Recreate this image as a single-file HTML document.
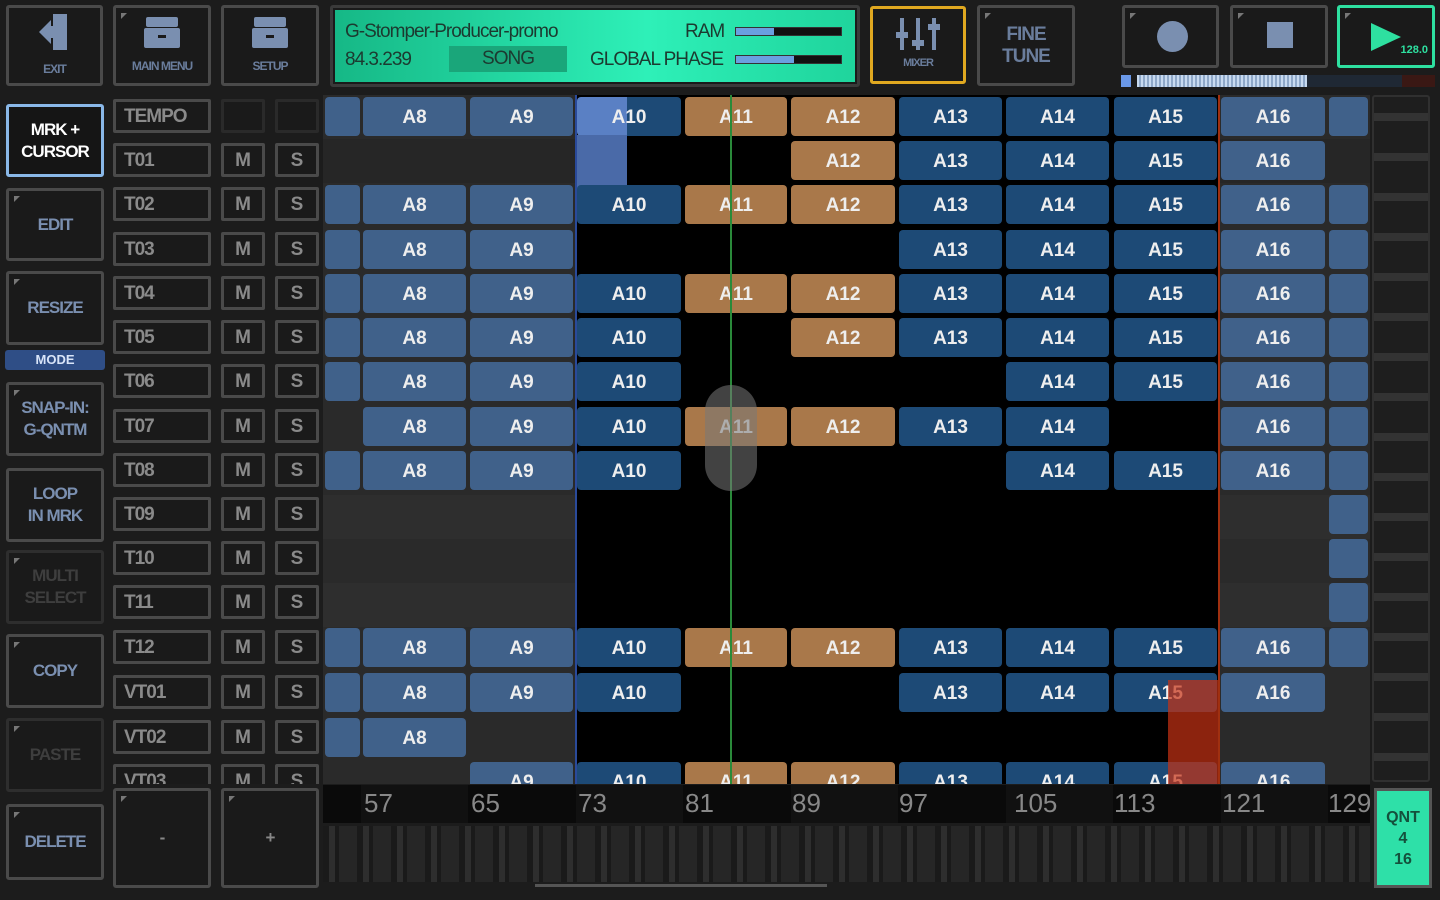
<!DOCTYPE html>
<html><head><meta charset="utf-8"><style>
*{margin:0;padding:0;box-sizing:border-box}
body{width:1440px;height:900px;background:#1c1c1c;position:relative;overflow:hidden;font-family:"Liberation Sans",sans-serif}
div{position:absolute}
.b{background:#1a1a1a;border:3px solid #4a4a4a;border-radius:3px;color:#7a8fb0;font-weight:bold;text-align:center;display:flex;align-items:center;justify-content:center;font-size:17px;line-height:22px;letter-spacing:-1px}
.b:before{content:"";position:absolute;left:5px;top:5px;border-left:6px solid #777;border-bottom:6px solid transparent}
.nb:before{display:none}
.tn{left:113px;width:98px;height:34px;background:#1a1a1a;border:3px solid #4a4a4a;border-radius:2px;color:#8a8a8a;font-weight:bold;font-size:19px;padding-left:8px;line-height:30px;letter-spacing:-1px}
.m,.s{width:44px;height:34px;background:#1a1a1a;border:3px solid #4a4a4a;border-radius:2px;color:#8a8a8a;font-weight:bold;font-size:19px;text-align:center;line-height:30px}
.m{left:221px}.s{left:275px}
.c{height:39px;border-radius:4px;color:#eee;font-weight:bold;font-size:19px;text-align:center;line-height:42px}
.l{background:#40618a}.d{background:#1d4a76}.t{background:#a9784a}
.r{color:#888;font-size:26px;top:788px}
</style></head><body>
<!-- top -->
<div class="b nb" style="left:6px;top:5px;width:97px;height:81px;flex-direction:column;font-size:12px;color:#6a7d9c"><svg width="36" height="40" viewBox="0 0 36 40"><rect x="16" y="2" width="14" height="36" fill="#7a8fb0"/><path d="M2 20 L14 8 V14 H16 V26 H14 V32 Z" fill="#7a8fb0"/></svg><span style="margin-top:6px">EXIT</span></div>
<div class="b" style="left:113px;top:5px;width:98px;height:81px;flex-direction:column;font-size:12px;color:#6a7d9c"><svg width="40" height="34" viewBox="0 0 40 34"><rect x="4" y="2" width="32" height="10" rx="2" fill="#7a8fb0"/><rect x="2" y="13" width="36" height="20" rx="2" fill="#7a8fb0"/><rect x="16" y="20" width="8" height="3" fill="#1a1a1a"/></svg><span style="margin-top:6px">MAIN MENU</span></div>
<div class="b nb" style="left:221px;top:5px;width:98px;height:81px;flex-direction:column;font-size:12px;color:#6a7d9c"><svg width="40" height="34" viewBox="0 0 40 34"><rect x="4" y="2" width="32" height="10" rx="2" fill="#7a8fb0"/><rect x="2" y="13" width="36" height="20" rx="2" fill="#7a8fb0"/><rect x="16" y="20" width="8" height="3" fill="#1a1a1a"/></svg><span style="margin-top:6px">SETUP</span></div>
<div style="left:330px;top:5px;width:530px;height:82px;border:3px solid #3a3a3a;border-radius:3px;background:#1a1a1a"></div>
<div style="left:335px;top:10px;width:520px;height:72px;background:linear-gradient(90deg,#16b886,#2ef0b8 60%,#1fd49c);color:#1c3a30;font-size:19px;letter-spacing:-1px">
<div style="left:10px;top:11px">G-Stomper-Producer-promo</div>
<div style="left:10px;top:39px">84.3.239</div>
<div style="left:114px;top:36px;width:118px;height:26px;background:#1aa67a;text-align:center;line-height:26px">SONG</div>
<div style="left:350px;top:11px">RAM</div>
<div style="left:255px;top:39px">GLOBAL PHASE</div>
<div style="left:400px;top:17px;width:107px;height:9px;background:#111;border:1px solid #333"><div style="left:0;top:0;width:38px;height:7px;background:#6aa0e0"></div></div>
<div style="left:400px;top:45px;width:107px;height:9px;background:#111;border:1px solid #333"><div style="left:0;top:0;width:58px;height:7px;background:#6aa0e0"></div></div>
</div>
<div class="b nb" style="left:870px;top:6px;width:96px;height:78px;border-color:#e0a820;flex-direction:column;font-size:11px;color:#6a7d9c"><svg width="48" height="36" viewBox="0 0 48 36"><g fill="#7a8fb0"><rect x="6" y="2" width="4" height="32"/><rect x="22" y="2" width="4" height="32"/><rect x="38" y="2" width="4" height="32"/><rect x="2" y="16" width="12" height="6"/><rect x="18" y="24" width="12" height="6"/><rect x="34" y="8" width="12" height="6"/></g></svg><span>MIXER</span></div>
<div class="b" style="left:977px;top:5px;width:98px;height:81px;font-size:19px;color:#6a7d9c">FINE<br>TUNE</div>
<div class="b" style="left:1122px;top:5px;width:97px;height:63px"><div style="left:32px;top:13px;width:31px;height:31px;border-radius:50%;background:#7a8fb0"></div></div>
<div class="b" style="left:1230px;top:5px;width:98px;height:63px"><div style="left:34px;top:14px;width:26px;height:26px;background:#7a8fb0"></div></div>
<div class="b" style="left:1337px;top:5px;width:98px;height:63px;border-color:#2ee0a0"><svg style="left:34px;top:12px" width="34" height="32"><path d="M2 2 L32 16 L2 30Z" fill="#2ee0a0"/></svg><div style="right:4px;bottom:4px;font-size:11px;color:#2ee0a0;letter-spacing:0">128.0</div></div>
<div style="left:1121px;top:75px;width:10px;height:12px;background:#6a98e8"></div>
<div style="left:1137px;top:75px;width:170px;height:12px;background:repeating-linear-gradient(90deg,#c8daf0 0 2px,#8fa8c8 2px 4px)"></div>
<div style="left:1307px;top:75px;width:95px;height:12px;background:#1f2834"></div>
<div style="left:1402px;top:75px;width:33px;height:12px;background:#3a1814"></div>
<!-- left buttons -->
<div class="b nb" style="left:6px;top:104px;width:98px;height:73px;border-color:#8ab8e8;color:#fff;background:#151515">MRK +<br>CURSOR</div>
<div class="b" style="left:6px;top:188px;width:98px;height:73px">EDIT</div>
<div class="b" style="left:6px;top:271px;width:98px;height:74px">RESIZE</div>
<div style="left:5px;top:350px;width:100px;height:20px;background:#2f4e86;border-radius:3px;color:#d8e4f8;font-weight:bold;font-size:13px;text-align:center;line-height:20px">MODE</div>
<div class="b" style="left:6px;top:382px;width:98px;height:74px">SNAP-IN:<br>G-QNTM</div>
<div class="b nb" style="left:6px;top:468px;width:98px;height:74px">LOOP<br>IN MRK</div>
<div class="b" style="left:6px;top:550px;width:98px;height:74px;color:#3e3e3e;border-color:#2e2e2e">MULTI<br>SELECT</div>
<div class="b" style="left:6px;top:634px;width:98px;height:74px">COPY</div>
<div class="b" style="left:6px;top:718px;width:98px;height:74px;color:#3e3e3e;border-color:#2e2e2e">PASTE</div>
<div class="b" style="left:6px;top:804px;width:98px;height:76px">DELETE</div>
<div class="b" style="left:113px;top:788px;width:98px;height:100px;color:#888">-</div>
<div class="b" style="left:221px;top:788px;width:98px;height:100px;color:#888">+</div>
<!-- tracks -->
<div class="tn" style="top:99px">TEMPO</div><div class="m" style="top:99px;border-color:#2a2a2a"></div><div class="s" style="top:99px;border-color:#2a2a2a"></div>
<div class="tn" style="top:143px">T01</div><div class="m" style="top:143px">M</div><div class="s" style="top:143px">S</div>
<div class="tn" style="top:187px">T02</div><div class="m" style="top:187px">M</div><div class="s" style="top:187px">S</div>
<div class="tn" style="top:232px">T03</div><div class="m" style="top:232px">M</div><div class="s" style="top:232px">S</div>
<div class="tn" style="top:276px">T04</div><div class="m" style="top:276px">M</div><div class="s" style="top:276px">S</div>
<div class="tn" style="top:320px">T05</div><div class="m" style="top:320px">M</div><div class="s" style="top:320px">S</div>
<div class="tn" style="top:364px">T06</div><div class="m" style="top:364px">M</div><div class="s" style="top:364px">S</div>
<div class="tn" style="top:409px">T07</div><div class="m" style="top:409px">M</div><div class="s" style="top:409px">S</div>
<div class="tn" style="top:453px">T08</div><div class="m" style="top:453px">M</div><div class="s" style="top:453px">S</div>
<div class="tn" style="top:497px">T09</div><div class="m" style="top:497px">M</div><div class="s" style="top:497px">S</div>
<div class="tn" style="top:541px">T10</div><div class="m" style="top:541px">M</div><div class="s" style="top:541px">S</div>
<div class="tn" style="top:585px">T11</div><div class="m" style="top:585px">M</div><div class="s" style="top:585px">S</div>
<div class="tn" style="top:630px">T12</div><div class="m" style="top:630px">M</div><div class="s" style="top:630px">S</div>
<div class="tn" style="top:675px">VT01</div><div class="m" style="top:675px">M</div><div class="s" style="top:675px">S</div>
<div class="tn" style="top:720px">VT02</div><div class="m" style="top:720px">M</div><div class="s" style="top:720px">S</div>
<div style="left:110px;top:762px;width:215px;height:22px;overflow:hidden"><div class="tn" style="left:3px;top:2px">VT03</div><div class="m" style="left:111px;top:2px">M</div><div class="s" style="left:165px;top:2px">S</div></div>
<!-- grid -->
<div style="left:323px;top:95px;width:1047px;height:689px;overflow:hidden;background:#2a2a2a">
<div style="left:0;top:44px;width:1047px;height:44px;background:#262626"></div>
<div style="left:0;top:400px;width:1047px;height:44px;background:#2e2e2e"></div>
<div style="left:0;top:488px;width:1047px;height:44px;background:#2e2e2e"></div>
<div style="left:254px;top:0;width:642px;height:689px;background:#000"></div>
<div style="left:0;top:0;width:1047px;height:689px">
<div class="c l" style="left:2px;top:2px;width:35px"></div><div class="c l" style="left:40px;top:2px;width:103px">A8</div><div class="c l" style="left:147px;top:2px;width:103px">A9</div><div class="c d" style="left:254px;top:2px;width:104px;background:linear-gradient(90deg,#5a80c4 50px,#1d4a76 50px)">A10</div><div class="c t" style="left:362px;top:2px;width:102px">A11</div><div class="c t" style="left:468px;top:2px;width:104px">A12</div><div class="c d" style="left:576px;top:2px;width:103px">A13</div><div class="c d" style="left:683px;top:2px;width:103px">A14</div><div class="c d" style="left:791px;top:2px;width:103px">A15</div><div class="c l" style="left:898px;top:2px;width:104px">A16</div><div class="c l" style="left:1006px;top:2px;width:39px"></div>
<div class="c t" style="left:468px;top:46px;width:104px">A12</div><div class="c d" style="left:576px;top:46px;width:103px">A13</div><div class="c d" style="left:683px;top:46px;width:103px">A14</div><div class="c d" style="left:791px;top:46px;width:103px">A15</div><div class="c l" style="left:898px;top:46px;width:104px">A16</div>
<div style="left:254px;top:40px;width:50px;height:62px;background:#4a6aa8;border-radius:0 0 3px 3px"></div>
<div class="c l" style="left:2px;top:90px;width:35px"></div><div class="c l" style="left:40px;top:90px;width:103px">A8</div><div class="c l" style="left:147px;top:90px;width:103px">A9</div><div class="c d" style="left:254px;top:90px;width:104px">A10</div><div class="c t" style="left:362px;top:90px;width:102px">A11</div><div class="c t" style="left:468px;top:90px;width:104px">A12</div><div class="c d" style="left:576px;top:90px;width:103px">A13</div><div class="c d" style="left:683px;top:90px;width:103px">A14</div><div class="c d" style="left:791px;top:90px;width:103px">A15</div><div class="c l" style="left:898px;top:90px;width:104px">A16</div><div class="c l" style="left:1006px;top:90px;width:39px"></div>
<div class="c l" style="left:2px;top:135px;width:35px"></div><div class="c l" style="left:40px;top:135px;width:103px">A8</div><div class="c l" style="left:147px;top:135px;width:103px">A9</div><div class="c d" style="left:576px;top:135px;width:103px">A13</div><div class="c d" style="left:683px;top:135px;width:103px">A14</div><div class="c d" style="left:791px;top:135px;width:103px">A15</div><div class="c l" style="left:898px;top:135px;width:104px">A16</div><div class="c l" style="left:1006px;top:135px;width:39px"></div>
<div class="c l" style="left:2px;top:179px;width:35px"></div><div class="c l" style="left:40px;top:179px;width:103px">A8</div><div class="c l" style="left:147px;top:179px;width:103px">A9</div><div class="c d" style="left:254px;top:179px;width:104px">A10</div><div class="c t" style="left:362px;top:179px;width:102px">A11</div><div class="c t" style="left:468px;top:179px;width:104px">A12</div><div class="c d" style="left:576px;top:179px;width:103px">A13</div><div class="c d" style="left:683px;top:179px;width:103px">A14</div><div class="c d" style="left:791px;top:179px;width:103px">A15</div><div class="c l" style="left:898px;top:179px;width:104px">A16</div><div class="c l" style="left:1006px;top:179px;width:39px"></div>
<div class="c l" style="left:2px;top:223px;width:35px"></div><div class="c l" style="left:40px;top:223px;width:103px">A8</div><div class="c l" style="left:147px;top:223px;width:103px">A9</div><div class="c d" style="left:254px;top:223px;width:104px">A10</div><div class="c t" style="left:468px;top:223px;width:104px">A12</div><div class="c d" style="left:576px;top:223px;width:103px">A13</div><div class="c d" style="left:683px;top:223px;width:103px">A14</div><div class="c d" style="left:791px;top:223px;width:103px">A15</div><div class="c l" style="left:898px;top:223px;width:104px">A16</div><div class="c l" style="left:1006px;top:223px;width:39px"></div>
<div class="c l" style="left:2px;top:267px;width:35px"></div><div class="c l" style="left:40px;top:267px;width:103px">A8</div><div class="c l" style="left:147px;top:267px;width:103px">A9</div><div class="c d" style="left:254px;top:267px;width:104px">A10</div><div class="c d" style="left:683px;top:267px;width:103px">A14</div><div class="c d" style="left:791px;top:267px;width:103px">A15</div><div class="c l" style="left:898px;top:267px;width:104px">A16</div><div class="c l" style="left:1006px;top:267px;width:39px"></div>
<div class="c l" style="left:40px;top:312px;width:103px">A8</div><div class="c l" style="left:147px;top:312px;width:103px">A9</div><div class="c d" style="left:254px;top:312px;width:104px">A10</div><div class="c t" style="left:362px;top:312px;width:102px">A11</div><div class="c t" style="left:468px;top:312px;width:104px">A12</div><div class="c d" style="left:576px;top:312px;width:103px">A13</div><div class="c d" style="left:683px;top:312px;width:103px">A14</div><div class="c l" style="left:898px;top:312px;width:104px">A16</div><div class="c l" style="left:1006px;top:312px;width:39px"></div>
<div class="c l" style="left:2px;top:356px;width:35px"></div><div class="c l" style="left:40px;top:356px;width:103px">A8</div><div class="c l" style="left:147px;top:356px;width:103px">A9</div><div class="c d" style="left:254px;top:356px;width:104px">A10</div><div class="c d" style="left:683px;top:356px;width:103px">A14</div><div class="c d" style="left:791px;top:356px;width:103px">A15</div><div class="c l" style="left:898px;top:356px;width:104px">A16</div><div class="c l" style="left:1006px;top:356px;width:39px"></div>
<div class="c l" style="left:1006px;top:400px;width:39px"></div><div class="c l" style="left:1006px;top:444px;width:39px"></div><div class="c l" style="left:1006px;top:488px;width:39px"></div>
<div class="c l" style="left:2px;top:533px;width:35px"></div><div class="c l" style="left:40px;top:533px;width:103px">A8</div><div class="c l" style="left:147px;top:533px;width:103px">A9</div><div class="c d" style="left:254px;top:533px;width:104px">A10</div><div class="c t" style="left:362px;top:533px;width:102px">A11</div><div class="c t" style="left:468px;top:533px;width:104px">A12</div><div class="c d" style="left:576px;top:533px;width:103px">A13</div><div class="c d" style="left:683px;top:533px;width:103px">A14</div><div class="c d" style="left:791px;top:533px;width:103px">A15</div><div class="c l" style="left:898px;top:533px;width:104px">A16</div><div class="c l" style="left:1006px;top:533px;width:39px"></div>
<div class="c l" style="left:2px;top:578px;width:35px"></div><div class="c l" style="left:40px;top:578px;width:103px">A8</div><div class="c l" style="left:147px;top:578px;width:103px">A9</div><div class="c d" style="left:254px;top:578px;width:104px">A10</div><div class="c d" style="left:576px;top:578px;width:103px">A13</div><div class="c d" style="left:683px;top:578px;width:103px">A14</div><div class="c d" style="left:791px;top:578px;width:103px">A15</div><div class="c l" style="left:898px;top:578px;width:104px">A16</div>
<div class="c l" style="left:2px;top:623px;width:35px"></div><div class="c l" style="left:40px;top:623px;width:103px">A8</div>
<div class="c l" style="left:147px;top:667px;width:103px">A9</div><div class="c d" style="left:254px;top:667px;width:104px">A10</div><div class="c t" style="left:362px;top:667px;width:102px">A11</div><div class="c t" style="left:468px;top:667px;width:104px">A12</div><div class="c d" style="left:576px;top:667px;width:103px">A13</div><div class="c d" style="left:683px;top:667px;width:103px">A14</div><div class="c d" style="left:791px;top:667px;width:103px">A15</div><div class="c l" style="left:898px;top:667px;width:104px">A16</div>
</div>
<div style="left:845px;top:585px;width:51px;height:104px;background:rgba(200,50,20,0.7)"></div>
<div style="left:252px;top:0;width:2px;height:689px;background:#2a4a9a"></div>
<div style="left:407px;top:0;width:2px;height:689px;background:#2a8a3a"></div>
<div style="left:895px;top:0;width:2px;height:689px;background:#a03010"></div>
<div style="left:382px;top:290px;width:52px;height:106px;border-radius:26px;background:rgba(120,120,120,0.55)"></div>
</div>
<!-- right scrollbar -->
<div style="left:1372px;top:95px;width:58px;height:687px;background:#1e1e1e;border:2px solid #303030;border-radius:3px;background-image:repeating-linear-gradient(180deg,#1e1e1e 0 16px,#333 16px 24px,#1e1e1e 24px 40px)"></div>
<!-- ruler -->
<div style="left:323px;top:785px;width:1047px;height:38px;background:#0a0a0a"></div>
<div style="left:361px;top:785px;width:107px;height:38px;background:#111"></div>
<div style="left:576px;top:785px;width:107px;height:38px;background:#111"></div>
<div style="left:791px;top:785px;width:107px;height:38px;background:#111"></div>
<div style="left:1006px;top:785px;width:107px;height:38px;background:#111"></div>
<div style="left:1221px;top:785px;width:107px;height:38px;background:#111"></div>
<div class="r" style="left:364px">57</div><div class="r" style="left:471px">65</div><div class="r" style="left:578px">73</div><div class="r" style="left:685px">81</div><div class="r" style="left:792px">89</div><div class="r" style="left:899px">97</div><div class="r" style="left:1014px">105</div><div class="r" style="left:1114px">113</div><div class="r" style="left:1222px">121</div><div class="r" style="left:1328px;width:42px;overflow:hidden">129</div>
<div style="left:323px;top:826px;width:1047px;height:56px;background:#1e1e1e;background-image:repeating-linear-gradient(90deg,#1a1a1a 0 6px,#2e2e2e 6px 12px,#1a1a1a 12px 16px,#262626 16px 34px)"></div>
<div style="left:535px;top:884px;width:292px;height:3px;background:#555"></div>
<div style="left:1374px;top:788px;width:58px;height:100px;border:3px solid #555;background:#2ee0a8;color:#14503c;font-weight:bold;font-size:16px;text-align:center;line-height:21px;padding-top:16px">QNT<br>4<br>16</div>
</body></html>
